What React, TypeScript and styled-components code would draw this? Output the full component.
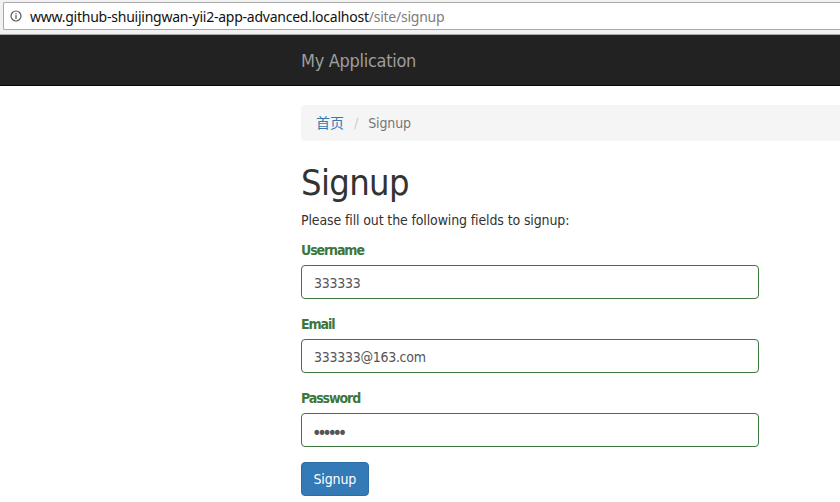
import React from "react";
import styled, { createGlobalStyle } from "styled-components";

const Global = createGlobalStyle`
  html, body { margin: 0; padding: 0; background: #fff; }
  body { width: 840px; height: 502px; overflow: hidden; font-family: "DejaVu Sans Condensed", "DejaVu Sans", "Noto Sans CJK SC", sans-serif; font-stretch: condensed; font-size: 14px; color: #333; }
  * { box-sizing: border-box; }
`;

const Chrome = styled.div`
  height: 35px;
  background: #f1f1f1;
  padding: 2px 0 0 3px;
  border-bottom: 1px solid #a9a9a9;
`;
const AddressBar = styled.div`
  height: 28px;
  background: #fff;
  border: 1px solid #a9a9a9;
  border-right: none;
  border-radius: 2px 0 0 2px;
  display: flex;
  align-items: center;
  padding-left: 6px;
  gap: 8px;
`;
const Url = styled.span`
  font-family: "Noto Sans", sans-serif;
  font-stretch: normal;
  letter-spacing: -0.24px;
  font-size: 14px;
  color: #111;
  white-space: nowrap;
`;
const UrlPath = styled.span`
  color: #7d7d7d;
`;
const Navbar = styled.nav`
  height: 51px;
  background: #222;
  border-bottom: 1px solid #080808;
  padding-left: 301px;
  display: flex;
  align-items: center;
`;
const Brand = styled.a`
  font-size: 18px;
  letter-spacing: -0.3px;
  color: #9d9d9d;
`;
const Main = styled.main`
  padding: 19px 0 0 301px;
`;
const Breadcrumb = styled.div`
  height: 36px;
  background: #f5f5f5;
  border-radius: 4px 0 0 4px;
  padding-left: 15px;
  display: flex;
  align-items: center;
`;
const Crumb = styled.a`
  color: #337ab7;
  position: relative;
  top: -1px;
`;
const Sep = styled.span`
  color: #ccc;
  margin: 0 10px;
`;
const Current = styled.span`
  color: #777;
  letter-spacing: -0.15px;
`;
const Title = styled.h1`
  margin: 20px 0 0;
  font-size: 36px;
  font-weight: 400;
  line-height: 44px;
  letter-spacing: -0.65px;
  color: #333;
`;
const Intro = styled.p`
  margin: 5px 0 0;
  line-height: 20px;
  letter-spacing: -0.13px;
  color: #333;
`;
const Form = styled.form`
  width: 458px;
  margin-top: 10px;
`;
const Field = styled.div`
  margin-bottom: 15px;
`;
const Label = styled.label`
  display: block;
  color: #3c763d;
  font-weight: 700;
  line-height: 20px;
  letter-spacing: -1.1px;
  margin-bottom: 5px;
`;
const Input = styled.input`
  display: block;
  width: 100%;
  height: 34px;
  padding: 7px 12px 5px;
  border: 1px solid #3c763d;
  border-radius: 4px;
  font: inherit;
  letter-spacing: -0.28px;
  color: #555;
  background: #fff;
  outline: none;
`;
const PasswordInput = styled(Input)`
  font-size: 18px;
  letter-spacing: -4.4px;
  padding: 7px 10px 3px;
`;
const Button = styled.button`
  display: block;
  height: 34px;
  padding: 0 11.5px;
  background: #337ab7;
  border: 1px solid #2e6da4;
  border-radius: 4px;
  color: #fff;
  font: inherit;
  letter-spacing: -0.15px;
`;

export default function App() {
  return (
    <>
      <Global />
      <Chrome>
        <AddressBar>
          <svg width="12" height="12" viewBox="0 0 12 12" fill="none">
            <circle cx="6" cy="6" r="5" stroke="#5a5a5a" strokeWidth="1.2" />
            <rect x="5.35" y="5.2" width="1.3" height="3.6" fill="#5a5a5a" />
            <rect x="5.35" y="3.1" width="1.3" height="1.3" fill="#5a5a5a" />
          </svg>
          <Url>
            www.github-shuijingwan-yii2-app-advanced.localhost<UrlPath>/site/signup</UrlPath>
          </Url>
        </AddressBar>
      </Chrome>
      <Navbar>
        <Brand>My Application</Brand>
      </Navbar>
      <Main>
        <Breadcrumb>
          <Crumb>首页</Crumb>
          <Sep>/</Sep>
          <Current>Signup</Current>
        </Breadcrumb>
        <Title>Signup</Title>
        <Intro>Please fill out the following fields to signup:</Intro>
        <Form>
          <Field>
            <Label>Username</Label>
            <Input defaultValue="333333" />
          </Field>
          <Field>
            <Label>Email</Label>
            <Input defaultValue="333333@163.com" />
          </Field>
          <Field>
            <Label>Password</Label>
            <PasswordInput type="password" defaultValue="333333" />
          </Field>
          <Button type="button">Signup</Button>
        </Form>
      </Main>
    </>
  );
}
